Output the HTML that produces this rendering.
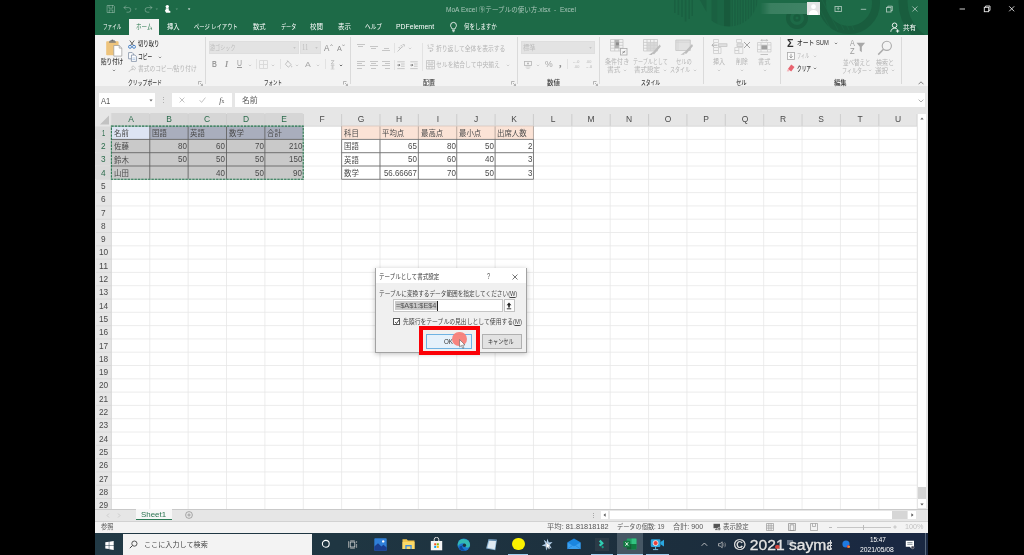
<!DOCTYPE html><html lang="ja"><head><meta charset="utf-8"><title>Excel</title><style>
*{box-sizing:border-box;margin:0;padding:0}
html,body{width:1024px;height:555px;overflow:hidden;background:#000;}
body{position:relative;font-family:"Liberation Sans","Noto Sans CJK JP",sans-serif;font-size:7px;color:#333;}
.abs{position:absolute}
.t{position:absolute;white-space:nowrap;line-height:1;transform-origin:0 50%}
#win{position:absolute;left:95px;top:0;width:833px;height:533px;background:#e6e6e6;overflow:hidden;filter:blur(.4px)}
#title{position:absolute;left:0;top:0;width:833px;height:35px;background:#1d6a47;overflow:hidden}
#ribbon{position:absolute;left:0;top:35px;width:833px;height:51px;background:#f3f3f3;}
.sep{position:absolute;top:37px;width:1px;height:47px;background:#dadada}
.ssep{position:absolute;width:1px;height:10px;background:#e2e2e2}
</style></head><body>
<div id="win">
<div id="title">
<svg class="abs" style="left:0;top:0" width="833" height="35" viewBox="95 0 833 35">
<defs><clipPath id="hc"><circle cx="729" cy="-2.500" r="29"/></clipPath></defs>
<g fill="none" stroke="#195d3e">
<circle cx="849" cy="3" r="27" stroke-width="8"/>
<circle cx="947" cy="2" r="44" stroke-width="9"/>
<circle cx="797" cy="18" r="9" stroke-width="4"/>
<circle cx="797" cy="18" r="2.600" stroke-width="2.200"/>
</g>
<g stroke="#1d6a47" stroke-width="1.100" opacity=".55"><path d="M826 -4l18 34M830 -8l19 38M834 -10l20 40M822 0l16 30M818 6l12 22"/></g>
<g fill="#1a6041">
<rect x="674" y="0" width="1.600" height="13"/><rect x="677.600" y="0" width="1.600" height="15"/><rect x="681.200" y="0" width="1.600" height="17"/><rect x="684.800" y="0" width="1.600" height="21.500"/><rect x="688.400" y="0" width="1.600" height="19"/><rect x="691.500" y="0" width="1.400" height="16"/>
<path d="M699.800 0h6.700v12z"/>
<g clip-path="url(#hc)"><rect x="711.500" y="0" width="5.800" height="30"/><rect x="717.300" y="0" width="6.700" height="30" opacity=".45"/><rect x="724" y="0" width="6.500" height="30" fill="#185a3c"/><rect x="731.5" y="0" width="1.500" height="30"/><rect x="734.2" y="0" width="1.500" height="30"/><rect x="736.9" y="0" width="1.500" height="30"/><rect x="739.6" y="0" width="1.500" height="30"/><rect x="742.3" y="0" width="1.500" height="30"/><rect x="745.0" y="0" width="1.500" height="30"/><rect x="747.7" y="0" width="1.500" height="30"/><rect x="750.4" y="0" width="1.500" height="30"/><rect x="753.1" y="0" width="1.500" height="30"/><rect x="755.8" y="0" width="1.500" height="30"/></g>
</g>
</svg>
<svg class="abs" style="left:0;top:0" width="200" height="19" viewBox="95 0 200 19" fill="none" stroke-linecap="round" stroke-linejoin="round">
<g stroke="rgba(255,255,255,.3)" stroke-width="1">
<path d="M107.500 5.500h6l1 1v6h-7z"/><path d="M109 5.800v2.400h3.600V5.800M109.200 12.300v-2.300h3.600v2.300"/>
<path d="M124.300 7.600h4.200a2.300 2.300 0 0 1 0 4.600h-1.600"/><path d="M125.800 5.800l-1.800 1.800 1.800 1.800"/>
<path d="M151.600 7.600h-4.200a2.300 2.300 0 0 0 0 4.600h1.600"/><path d="M150.100 5.800l1.800 1.800-1.800 1.800"/>
</g>
<g fill="rgba(255,255,255,.3)" stroke="none"><path d="M134.600 8.600h2.400l-1.200 1.400z"/><path d="M155.600 8.600h2.400l-1.200 1.400z"/><path d="M175.600 8.600h2.400l-1.200 1.400z"/></g>
<g fill="#fff" stroke="none"><circle cx="167.300" cy="6.600" r="1.700"/><path d="M165.800 8.200h3v2.300l1.500.6v1.700h-4.200l-1.300-2.400.8-.5z"/>
<path d="M187.800 8.600h2.600l-1.300 1.500z"/></g>
</svg>
<div class="t" style="left:351.0px;top:7px;font-size:6.7px;color:rgba(255,255,255,.6);transform:scaleX(0.980);">MoA Excel ⑨テーブルの使い方.xlsx&nbsp; -&nbsp; Excel</div>
<div class="abs" style="left:665px;top:3px;width:48px;height:11px;background:linear-gradient(90deg,rgba(58,127,96,0),#3a7f60 22%,#3f8365);filter:blur(.5px)"></div>
<svg class="abs" style="left:712.0px;top:2.0px" width="13" height="13" viewBox="0 0 13 13" ><rect width="13" height="13" fill="#e4e4e4"/><circle cx="6.500" cy="4.700" r="2.400" fill="#fff"/><path d="M1.800 13c0-3.400 2-5 4.700-5s4.700 1.600 4.700 5z" fill="#fff"/></svg>
<svg class="abs" style="left:731px;top:0" width="102" height="19" viewBox="826 0 102 19" fill="none" stroke="rgba(255,255,255,.6)" stroke-width=".9">
<rect x="835" y="6.500" width="6.400" height="5"/><path d="M838.200 10.300v-2.500M837 8.800l1.200-1.200 1.200 1.200"/>
<path d="M860.800 9.300h5.400"/>
<rect x="886.500" y="7.500" width="4.500" height="4.500"/><path d="M887.800 7.500v-1.300h4.500v4.500h-1.300"/>
<path d="M912.400 6.500l5 5M917.400 6.500l-5 5"/>
</svg>
<div class="abs" style="left:34.400px;top:19px;width:29.800px;height:17px;background:#f3f3f3"></div>
<div class="t" style="left:40.7px;top:24px;font-size:6.8px;color:#217346;transform:scaleX(0.817);">ホーム</div>
<div class="t" style="left:7.7px;top:24px;font-size:6.8px;color:#fff;transform:scaleX(0.673);">ファイル</div>
<div class="t" style="left:72.0px;top:24px;font-size:6.8px;color:#fff;transform:scaleX(0.927);">挿入</div>
<div class="t" style="left:99.0px;top:24px;font-size:6.8px;color:#fff;transform:scaleX(0.780);">ページ レイアウト</div>
<div class="t" style="left:157.5px;top:24px;font-size:6.8px;color:#fff;transform:scaleX(0.934);">数式</div>
<div class="t" style="left:185.5px;top:24px;font-size:6.8px;color:#fff;transform:scaleX(0.745);">データ</div>
<div class="t" style="left:215.0px;top:24px;font-size:6.8px;color:#fff;transform:scaleX(0.949);">校閲</div>
<div class="t" style="left:242.6px;top:24px;font-size:6.8px;color:#fff;transform:scaleX(0.956);">表示</div>
<div class="t" style="left:269.9px;top:24px;font-size:6.8px;color:#fff;transform:scaleX(0.834);">ヘルプ</div>
<div class="t" style="left:300.9px;top:24px;font-size:6.8px;color:#fff;transform:scaleX(1.008);">PDFelement</div>
<div class="t" style="left:368.9px;top:24px;font-size:6.8px;color:#fff;transform:scaleX(0.804);">何をしますか</div>
<svg class="abs" style="left:353.6px;top:20.8px" width="9" height="12" viewBox="0 0 9 12" fill="none" stroke="#fff" stroke-width=".85"><path d="M3 8c0-1.300-1.400-1.900-1.400-3.700a2.900 2.900 0 0 1 5.800 0c0 1.800-1.400 2.400-1.400 3.700z"/><path d="M3.200 9.400h2.600M3.600 10.700h1.800"/></svg>
<svg class="abs" style="left:795.0px;top:22.0px" width="10" height="11" viewBox="0 0 10 11" fill="none" stroke="#fff" stroke-width=".9"><circle cx="4.600" cy="3.300" r="2.300"/><path d="M.8 9.800c.2-2.300 1.600-3.600 3.800-3.600 1 0 1.700.2 2.300.7M7.600 7.300v3.400M5.900 9h3.400"/></svg>
<div class="t" style="left:807.7px;top:25px;font-size:6.8px;color:#fff;transform:scaleX(0.964);">共有</div>
</div>
<div id="ribbon"></div>
<div class="sep" style="left:109.5px"></div>
<div class="sep" style="left:255.2px"></div>
<div class="sep" style="left:422.0px"></div>
<div class="sep" style="left:503.8px"></div>
<div class="sep" style="left:607.5px"></div>
<div class="sep" style="left:685.0px"></div>
<div class="sep" style="left:805.8px"></div>
<svg class="abs" style="left:10.0px;top:39.0px" width="18" height="18" viewBox="0 0 18 18" ><rect x="1.200" y="2.200" width="12.400" height="14" rx=".8" fill="#eec47c"/>
<path d="M4.800 2.600v-1.200h1.400a1.300 1.300 0 0 1 2.400 0h1.400v1.200z" fill="#6b6b6b"/><rect x="4" y="2.400" width="6.800" height="1.300" fill="#7a7a7a"/>
<path d="M8.800 6.500h5.400l2.600 2.600v8h-8z" fill="#fff" stroke="#9a9a9a" stroke-width=".7"/><path d="M14.200 6.500v2.600h2.600" fill="none" stroke="#9a9a9a" stroke-width=".7"/></svg>
<div class="t" style="left:6.0px;top:59px;font-size:6.8px;color:#333;transform:scaleX(0.820);font-weight:500;">貼り付け</div>
<svg class="abs" style="left:16.6px;top:68.7px" width="4" height="3" viewBox="0 0 4 3"><path d="M.8 .8L2 2 3.200 .8" fill="none" stroke="#777" stroke-width=".75"/></svg>
<svg class="abs" style="left:32.5px;top:39.5px" width="8" height="9" viewBox="0 0 8 9" ><path d="M1.800 .5l3.700 5M6.200 .5l-3.700 5" stroke="#555" stroke-width=".9" fill="none"/><circle cx="2" cy="6.800" r="1.500" fill="none" stroke="#3b79c4" stroke-width=".9"/><circle cx="6" cy="6.800" r="1.500" fill="none" stroke="#3b79c4" stroke-width=".9"/></svg>
<div class="t" style="left:42.5px;top:41px;font-size:6.8px;color:#333;transform:scaleX(0.783);font-weight:500;">切り取り</div>
<svg class="abs" style="left:32.5px;top:51.5px" width="9" height="10" viewBox="0 0 9 10" ><path d="M.6 .6h3.600l1.400 1.400v4.800h-5z" fill="#fff" stroke="#7d8da3" stroke-width=".8"/><path d="M3.400 3h3.400l1.600 1.600v4.800h-5z" fill="#fff" stroke="#7d8da3" stroke-width=".8"/><path d="M4.400 6h2.800M4.400 7.500h2.800" stroke="#8fb0d8" stroke-width=".6"/></svg>
<div class="t" style="left:42.5px;top:54px;font-size:6.8px;color:#333;transform:scaleX(0.696);font-weight:500;">コピー</div>
<svg class="abs" style="left:62.6px;top:55.5px" width="4" height="3" viewBox="0 0 4 3"><path d="M.8 .8L2 2 3.200 .8" fill="none" stroke="#777" stroke-width=".75"/></svg>
<svg class="abs" style="left:32.5px;top:65.0px" width="9" height="8" viewBox="0 0 9 8" ><path d="M5 .8l2.800 2.600-1.500 1.400-2.700-2.600zM4.300 3.400l-3.600 3.600M5.200 4.400l-2 .4" fill="none" stroke="#c2c2c2" stroke-width=".9"/></svg>
<div class="t" style="left:42.7px;top:66px;font-size:6.6px;color:#b4b4b4;transform:scaleX(0.866);">書式のコピー/貼り付け</div>
<div class="t" style="left:33.0px;top:80px;font-size:6.4px;color:#3a3a3a;transform:scaleX(0.758);font-weight:500;">クリップボード</div>
<svg class="abs" style="left:102.7px;top:80.5px" width="5" height="5" viewBox="0 0 5 5" ><path d="M.5 3.500v-3h3M2 2l2.500 2.500M4.500 2.800v1.700h-1.700" fill="none" stroke="#9a9a9a" stroke-width=".7"/></svg>
<div class="abs" style="left:113.9px;top:41px;width:89.800px;height:13.300px;background:#e3e3e3;border:1px solid #dedede"></div>
<div class="abs" style="left:205.0px;top:41px;width:20.700px;height:13.300px;background:#e3e3e3;border:1px solid #dedede"></div>
<div class="t" style="left:115.0px;top:45px;font-size:6.4px;color:#bdbdbd;transform:scaleX(0.801);">游ゴシック</div>
<svg class="abs" style="left:197.6px;top:46.8px" width="3" height="2" viewBox="0 0 3 2" ><path d="M.2 .2h2.600L1.500 1.800z" fill="#bcbcbc"/></svg>
<div class="t" style="left:206.6px;top:44px;font-size:8.4px;color:#bdbdbd;transform:scaleX(0.792);font-family:&quot;Liberation Serif&quot;,serif;">11</div>
<svg class="abs" style="left:220.4px;top:46.8px" width="3" height="2" viewBox="0 0 3 2" ><path d="M.2 .2h2.600L1.500 1.800z" fill="#bcbcbc"/></svg>
<div class="t" style="left:229.2px;top:45px;font-size:8.2px;color:#8a8a8a;transform:scaleX(0.987);">A</div>
<svg class="abs" style="left:234.6px;top:43.5px" width="3" height="2.5" viewBox="0 0 3 2.5" ><path d="M.3 2L1.500 .5 2.700 2" fill="none" stroke="#8a8a8a" stroke-width=".6"/></svg>
<div class="t" style="left:241.8px;top:45px;font-size:7.2px;color:#8a8a8a;transform:scaleX(1.001);">A</div>
<svg class="abs" style="left:246.8px;top:43.5px" width="3" height="2.5" viewBox="0 0 3 2.5" ><path d="M.3 .5L1.500 2 2.700 .5" fill="none" stroke="#8a8a8a" stroke-width=".6"/></svg>
<div class="t" style="left:117.4px;top:60px;font-size:8.6px;color:#9a9a9a;transform:scaleX(0.788);font-weight:bold;">B</div>
<div class="t" style="left:130.4px;top:60px;font-size:8.6px;color:#9a9a9a;transform:scaleX(0.953);font-style:italic;font-family:&quot;Liberation Serif&quot;,serif;font-weight:bold;">I</div>
<div class="t" style="left:142.0px;top:60px;font-size:8.2px;color:#9a9a9a;transform:scaleX(0.844);text-decoration:underline;">U</div>
<svg class="abs" style="left:152.7px;top:63.5px" width="4" height="3" viewBox="0 0 4 3"><path d="M.8 .8L2 2 3.200 .8" fill="none" stroke="#c4c4c4" stroke-width=".75"/></svg>
<div class="ssep" style="left:160.9px;top:59px"></div>
<svg class="abs" style="left:164.2px;top:59.8px" width="9" height="9" viewBox="0 0 9 9" ><path d="M.5 .5h8v8h-8zM4.500 .5v8M.5 4.500h8" fill="none" stroke="#d8d8d8" stroke-width=".9"/></svg>
<svg class="abs" style="left:176.4px;top:63.5px" width="4" height="3" viewBox="0 0 4 3"><path d="M.8 .8L2 2 3.200 .8" fill="none" stroke="#c4c4c4" stroke-width=".75"/></svg>
<div class="ssep" style="left:184.7px;top:59px"></div>
<svg class="abs" style="left:188.5px;top:59.5px" width="9" height="9" viewBox="0 0 9 9" ><path d="M3.800 1.200l3.400 3.400-2.900 2.600-2.900-3zM3.200 .4l1.300 1.500" fill="none" stroke="#b5b5b5" stroke-width=".8"/><path d="M7.800 5.600c.5.900.7 1.300 0 1.800-.7-.5-.5-.9 0-1.800z" fill="#b5b5b5"/></svg>
<svg class="abs" style="left:199.9px;top:63.5px" width="4" height="3" viewBox="0 0 4 3"><path d="M.8 .8L2 2 3.200 .8" fill="none" stroke="#c4c4c4" stroke-width=".75"/></svg>
<div class="t" style="left:209.8px;top:61px;font-size:8px;color:#a8a8a8;transform:scaleX(1.085);">A</div>
<svg class="abs" style="left:221.0px;top:63.5px" width="4" height="3" viewBox="0 0 4 3"><path d="M.8 .8L2 2 3.200 .8" fill="none" stroke="#c4c4c4" stroke-width=".75"/></svg>
<div class="ssep" style="left:229.5px;top:59px"></div>
<svg class="abs" style="left:234.5px;top:59.5px" width="5" height="10" viewBox="0 0 5 10" ><path d="M1 .6h3L1.200 4h3" fill="none" stroke="#b0b0b0" stroke-width=".7"/><path d="M.8 5.500h3.600M2.600 5.500v3.500M1.200 7h2.800M.8 9h3.600" fill="none" stroke="#bcbcbc" stroke-width=".6"/></svg>
<svg class="abs" style="left:244.4px;top:63.5px" width="4" height="3" viewBox="0 0 4 3"><path d="M.8 .8L2 2 3.200 .8" fill="none" stroke="#444" stroke-width=".75"/></svg>
<div class="t" style="left:168.8px;top:80px;font-size:6.4px;color:#3a3a3a;transform:scaleX(0.700);font-weight:500;">フォント</div>
<svg class="abs" style="left:248.2px;top:80.5px" width="5" height="5" viewBox="0 0 5 5" ><path d="M.5 3.500v-3h3M2 2l2.500 2.500M4.500 2.800v1.700h-1.700" fill="none" stroke="#9a9a9a" stroke-width=".7"/></svg>
<div class="abs" style="left:261.6px;top:44.0px;width:8px;height:.9px;background:#c6c6c6"></div><div class="abs" style="left:263.1px;top:45.9px;width:5px;height:.9px;background:#c6c6c6"></div>
<div class="abs" style="left:274.6px;top:46.2px;width:8px;height:.9px;background:#c6c6c6"></div><div class="abs" style="left:276.1px;top:48.1px;width:5px;height:.9px;background:#c6c6c6"></div>
<div class="abs" style="left:288.9px;top:48.0px;width:5px;height:.9px;background:#c6c6c6"></div><div class="abs" style="left:287.4px;top:49.9px;width:8px;height:.9px;background:#c6c6c6"></div>
<div class="ssep" style="left:298.5px;top:43px"></div>
<svg class="abs" style="left:302.0px;top:43.5px" width="8" height="8" viewBox="0 0 8 8" ><path d="M.5 7.500L5 3M1.500 3.500c1.200-.4 2 .2 1.600 1.400M3.600 1.800c1.200-.5 2.100.2 1.700 1.500M5.600 .6l1.800.1-.2 1.800" fill="none" stroke="#b8b8b8" stroke-width=".8"/></svg>
<svg class="abs" style="left:312.8px;top:46.8px" width="4" height="3" viewBox="0 0 4 3"><path d="M.8 .8L2 2 3.200 .8" fill="none" stroke="#c4c4c4" stroke-width=".75"/></svg>
<div class="abs" style="left:261.6px;top:61.0px;width:8px;height:.9px;background:#c6c6c6"></div><div class="abs" style="left:261.6px;top:63.2px;width:5.5px;height:.9px;background:#c6c6c6"></div><div class="abs" style="left:261.6px;top:65.4px;width:8px;height:.9px;background:#c6c6c6"></div><div class="abs" style="left:261.6px;top:67.6px;width:5.5px;height:.9px;background:#c6c6c6"></div>
<div class="abs" style="left:274.6px;top:61.0px;width:8px;height:.9px;background:#c6c6c6"></div><div class="abs" style="left:275.9px;top:63.2px;width:5.5px;height:.9px;background:#c6c6c6"></div><div class="abs" style="left:274.6px;top:65.4px;width:8px;height:.9px;background:#c6c6c6"></div><div class="abs" style="left:275.9px;top:67.6px;width:5.5px;height:.9px;background:#c6c6c6"></div>
<div class="abs" style="left:287.4px;top:61.0px;width:8px;height:.9px;background:#c6c6c6"></div><div class="abs" style="left:289.9px;top:63.2px;width:5.5px;height:.9px;background:#c6c6c6"></div><div class="abs" style="left:287.4px;top:65.4px;width:8px;height:.9px;background:#c6c6c6"></div><div class="abs" style="left:289.9px;top:67.6px;width:5.5px;height:.9px;background:#c6c6c6"></div>
<div class="ssep" style="left:298.5px;top:60px"></div>
<svg class="abs" style="left:302.0px;top:60.5px" width="8" height="9" viewBox="0 0 8 9" ><path d="M.3 .8h7.400M4 3h3.700M4 5.200h3.700M.3 7.600h7.400" stroke="#bdbdbd" stroke-width=".8"/><path d="M.4 4.100h2.400M1.800 3l1.100 1.100-1.100 1.100" fill="none" stroke="#777" stroke-width=".9"/></svg>
<svg class="abs" style="left:314.8px;top:60.5px" width="8" height="9" viewBox="0 0 8 9" ><path d="M.3 .8h7.400M4 3h3.700M4 5.200h3.700M.3 7.600h7.400" stroke="#bdbdbd" stroke-width=".8"/><path d="M.4 4.100h2.400M1.800 3l1.100 1.100-1.100 1.100" fill="none" stroke="#777" stroke-width=".9"/></svg>
<div class="ssep" style="left:326.7px;top:43px;height:28px"></div>
<svg class="abs" style="left:331.5px;top:44.0px" width="7" height="8" viewBox="0 0 7 8" ><path d="M1.200 .6c-.8 1 .8 1.500 0 2.600M.8 4.200h3.600a1.400 1.400 0 0 1 0 2.800h-1.400M3.800 6l-1 1 1 1M3.600 .8h3M5.200 2.400h1.400" fill="none" stroke="#b8b8b8" stroke-width=".8"/></svg>
<div class="t" style="left:341.3px;top:46px;font-size:6.6px;color:#b4b4b4;transform:scaleX(0.879);">折り返して全体を表示する</div>
<svg class="abs" style="left:330.5px;top:59.7px" width="9" height="10" viewBox="0 0 9 10" ><path d="M.5 .5h8v8.500h-8zM.5 3h8M.5 6.500h8M3 .5v2.500M6 .5v2.500M3 6.500v2.500M6 6.500v2.500" fill="none" stroke="#c2c2c2" stroke-width=".8"/><path d="M2 4.750h5" stroke="#aaa" stroke-width=".7"/></svg>
<div class="t" style="left:341.3px;top:62px;font-size:6.6px;color:#b4b4b4;transform:scaleX(0.883);">セルを結合して中央揃え</div>
<svg class="abs" style="left:411.0px;top:64.0px" width="4" height="3" viewBox="0 0 4 3"><path d="M.8 .8L2 2 3.200 .8" fill="none" stroke="#c4c4c4" stroke-width=".75"/></svg>
<div class="t" style="left:328.0px;top:80px;font-size:6.4px;color:#3a3a3a;transform:scaleX(0.939);font-weight:500;">配置</div>
<svg class="abs" style="left:415.7px;top:80.5px" width="5" height="5" viewBox="0 0 5 5" ><path d="M.5 3.500v-3h3M2 2l2.500 2.500M4.500 2.800v1.700h-1.700" fill="none" stroke="#9a9a9a" stroke-width=".7"/></svg>
<div class="abs" style="left:426.2px;top:41px;width:73.700px;height:13.300px;background:#e3e3e3;border:1px solid #dedede"></div>
<div class="t" style="left:428.0px;top:45px;font-size:6.4px;color:#bdbdbd;transform:scaleX(0.978);">標準</div>
<svg class="abs" style="left:493.7px;top:46.8px" width="3" height="2" viewBox="0 0 3 2" ><path d="M.2 .2h2.600L1.500 1.800z" fill="#bcbcbc"/></svg>
<svg class="abs" style="left:428.5px;top:60.5px" width="8" height="8" viewBox="0 0 8 8" ><rect x=".5" y=".5" width="7" height="4" fill="none" stroke="#b5b5b5" stroke-width=".8"/><circle cx="4" cy="2.500" r="1" fill="#b5b5b5"/><path d="M1.500 6h5M2.500 7.400h3" stroke="#c8c8c8" stroke-width=".7"/></svg>
<svg class="abs" style="left:440.6px;top:63.5px" width="4" height="3" viewBox="0 0 4 3"><path d="M.8 .8L2 2 3.200 .8" fill="none" stroke="#c4c4c4" stroke-width=".75"/></svg>
<div class="t" style="left:449.5px;top:60px;font-size:8.4px;color:#a6a6a6;transform:scaleX(1.033);">%</div>
<div class="t" style="left:464.4px;top:59px;font-size:10px;color:#8c8c8c;transform:scaleX(1.040);font-weight:bold;font-family:&quot;Liberation Serif&quot;,serif;">,</div>
<div class="ssep" style="left:472.3px;top:59px"></div>
<div class="t" style="left:477.5px;top:61px;font-size:3.8px;color:#b0b0b0;">←.0</div>
<div class="t" style="left:479.0px;top:66px;font-size:3.8px;color:#b8b8b8;">.00</div>
<div class="t" style="left:491.0px;top:61px;font-size:3.8px;color:#b8b8b8;">.00</div>
<div class="t" style="left:490.2px;top:66px;font-size:3.8px;color:#b0b0b0;">→.0</div>
<div class="t" style="left:452.2px;top:80px;font-size:6.4px;color:#3a3a3a;transform:scaleX(1.017);font-weight:500;">数値</div>
<svg class="abs" style="left:497.7px;top:80.5px" width="5" height="5" viewBox="0 0 5 5" ><path d="M.5 3.500v-3h3M2 2l2.500 2.500M4.500 2.800v1.700h-1.700" fill="none" stroke="#9a9a9a" stroke-width=".7"/></svg>
<svg class="abs" style="left:514.5px;top:39.0px" width="18" height="17" viewBox="0 0 18 17" ><path d="M.5 .5h12.500v11.500H.5zM.5 3.400h12.500M.5 6.300h12.500M.5 9.200h12.500M4.700 .5v11.500M8.900 .5v11.500" fill="none" stroke="#c8c8c8" stroke-width=".8"/><rect x="4.700" y=".9" width="4.200" height="8.300" fill="#b4b4b4"/><rect x="6" y="3.400" width="2.900" height="2.900" fill="#8c8c8c"/><rect x="10.500" y="9.500" width="6.500" height="6.500" fill="#f6f6f6" stroke="#a8a8a8" stroke-width=".8"/><path d="M12.400 13h2.800M12.400 14.400l2.800-2.600" stroke="#777" stroke-width=".7"/></svg>
<div class="t" style="left:510.0px;top:59px;font-size:6.6px;color:#b4b4b4;transform:scaleX(0.918);">条件付き</div>
<div class="t" style="left:512.3px;top:67px;font-size:6.6px;color:#b4b4b4;transform:scaleX(1.016);">書式</div>
<svg class="abs" style="left:528.0px;top:68.8px" width="4" height="3" viewBox="0 0 4 3"><path d="M.8 .8L2 2 3.200 .8" fill="none" stroke="#c4c4c4" stroke-width=".75"/></svg>
<svg class="abs" style="left:547.5px;top:39.0px" width="18" height="17" viewBox="0 0 18 17" ><path d="M.5 .5h14v11.500H.5zM.5 3.400h14M.5 6.300h14M.5 9.200h14M4 .5v11.500M7.500 .5v11.500M11 .5v11.500" fill="none" stroke="#c8c8c8" stroke-width=".8"/><rect x="4" y="3.400" width="10.500" height="8.600" fill="#d2d2d2" opacity=".8"/><path d="M16.800 5.500l-6.800 7.500-2.600 1.800 3.800 .4 6.600-7.600z" fill="#bdbdbd"/><path d="M5.500 15.800l3-1.200 1 1.200z" fill="#a8a8a8"/></svg>
<div class="t" style="left:537.5px;top:59px;font-size:6.6px;color:#b4b4b4;transform:scaleX(0.762);">テーブルとして</div>
<div class="t" style="left:538.8px;top:67px;font-size:6.6px;color:#b4b4b4;transform:scaleX(0.986);">書式設定</div>
<svg class="abs" style="left:567.5px;top:68.8px" width="4" height="3" viewBox="0 0 4 3"><path d="M.8 .8L2 2 3.200 .8" fill="none" stroke="#c4c4c4" stroke-width=".75"/></svg>
<svg class="abs" style="left:580.0px;top:39.0px" width="18" height="17" viewBox="0 0 18 17" ><path d="M.8 1h14.500v10.500H.8z" fill="#e2e2e2" stroke="#c4c4c4" stroke-width=".8"/><path d="M3 1v10.500M.8 3.200h14.500" stroke="#d0d0d0" stroke-width=".6"/><path d="M17 5l-6.800 7.500-2.600 1.800 3.800 .4 6.600-7.600z" fill="#bdbdbd"/><path d="M5.500 15.500l3-1.200 1 1.200z" fill="#a8a8a8"/></svg>
<div class="t" style="left:581.0px;top:59px;font-size:6.6px;color:#b4b4b4;transform:scaleX(0.804);">セルの</div>
<div class="t" style="left:575.4px;top:67px;font-size:6.6px;color:#b4b4b4;transform:scaleX(0.758);">スタイル</div>
<svg class="abs" style="left:598.0px;top:68.8px" width="4" height="3" viewBox="0 0 4 3"><path d="M.8 .8L2 2 3.200 .8" fill="none" stroke="#c4c4c4" stroke-width=".75"/></svg>
<div class="t" style="left:545.7px;top:80px;font-size:6.4px;color:#3a3a3a;transform:scaleX(0.747);font-weight:500;">スタイル</div>
<svg class="abs" style="left:615.5px;top:39.0px" width="17" height="17" viewBox="0 0 17 17" ><path d="M2.500 .5h5v3h-5zM2.500 8.500h5v3h-5zM2.500 11.500h5v3h-5zM7.500 8.500h2.500v6h-2.500" fill="none" stroke="#cdcdcd" stroke-width=".8"/><rect x="7.500" y="4.800" width="8.500" height="2.800" fill="#e0e0e0" stroke="#c0c0c0" stroke-width=".7"/><path d="M6.500 6.200H1M3 4.200l-2 2 2 2" fill="none" stroke="#a8a8a8" stroke-width=".9"/></svg>
<div class="t" style="left:617.7px;top:59px;font-size:6.6px;color:#b4b4b4;transform:scaleX(0.902);">挿入</div>
<svg class="abs" style="left:621.7px;top:68.8px" width="4" height="3" viewBox="0 0 4 3"><path d="M.8 .8L2 2 3.200 .8" fill="none" stroke="#c4c4c4" stroke-width=".75"/></svg>
<svg class="abs" style="left:638.5px;top:39.0px" width="17" height="17" viewBox="0 0 17 17" ><path d="M2.500 .5h5v3h-5zM.8 8.500h4v3h-4zM.8 11.500h4v3h-4zM4.800 8.500h4v6h-4" fill="none" stroke="#cdcdcd" stroke-width=".8"/><rect x="3" y="4.800" width="6" height="2.800" fill="#e0e0e0" stroke="#c0c0c0" stroke-width=".7"/><path d="M10 3l6 6M16 3l-6 6" fill="none" stroke="#a4a4a4" stroke-width="1"/></svg>
<div class="t" style="left:640.5px;top:59px;font-size:6.6px;color:#b4b4b4;transform:scaleX(0.902);">削除</div>
<svg class="abs" style="left:644.5px;top:68.8px" width="4" height="3" viewBox="0 0 4 3"><path d="M.8 .8L2 2 3.200 .8" fill="none" stroke="#c4c4c4" stroke-width=".75"/></svg>
<svg class="abs" style="left:660.5px;top:39.0px" width="17" height="17" viewBox="0 0 17 17" ><path d="M1.500 3.500h13.500v9.500H1.500zM5 3.500v9.500M11.500 3.500v9.500M1.500 6h13.500M1.500 10.500h13.500" fill="none" stroke="#cdcdcd" stroke-width=".8"/><rect x="5.400" y="6.300" width="5.800" height="4" fill="#a0a0a0"/><path d="M5 1.300h6.500M6 .3l-1 1 1 1M10.500 .3l1 1-1 1M4.500 15.500h7.500" fill="none" stroke="#aaa" stroke-width=".7"/></svg>
<div class="t" style="left:663.4px;top:59px;font-size:6.6px;color:#b4b4b4;transform:scaleX(0.940);">書式</div>
<svg class="abs" style="left:667.6px;top:68.8px" width="4" height="3" viewBox="0 0 4 3"><path d="M.8 .8L2 2 3.200 .8" fill="none" stroke="#c4c4c4" stroke-width=".75"/></svg>
<div class="t" style="left:640.5px;top:80px;font-size:6.4px;color:#3a3a3a;transform:scaleX(0.837);font-weight:500;">セル</div>
<div class="t" style="left:692.2px;top:39px;font-size:10px;color:#333;transform:scaleX(1.097);font-weight:bold;">Σ</div>
<div class="t" style="left:702.0px;top:40px;font-size:6.8px;color:#333;transform:scaleX(0.848);font-weight:500;">オート SUM</div>
<svg class="abs" style="left:738.8px;top:42.0px" width="4" height="3" viewBox="0 0 4 3"><path d="M.8 .8L2 2 3.200 .8" fill="none" stroke="#666" stroke-width=".75"/></svg>
<svg class="abs" style="left:692.0px;top:51.5px" width="8" height="8" viewBox="0 0 8 8" ><rect x=".5" y=".5" width="7" height="7" fill="#fafafa" stroke="#a8a8a8" stroke-width=".8"/><path d="M4 1.800v4M2.400 4.300l1.600 1.600 1.600-1.600" fill="none" stroke="#8a8a8a" stroke-width=".8"/></svg>
<div class="t" style="left:702.0px;top:53px;font-size:6.6px;color:#b4b4b4;transform:scaleX(0.605);">フィル</div>
<svg class="abs" style="left:717.7px;top:54.5px" width="4" height="3" viewBox="0 0 4 3"><path d="M.8 .8L2 2 3.200 .8" fill="none" stroke="#c4c4c4" stroke-width=".75"/></svg>
<svg class="abs" style="left:690.8px;top:64.2px" width="9" height="8" viewBox="0 0 9 8" ><path d="M5.200 .5l3.300 2.400-3.300 4.600-3.300-2.400z" fill="#e8636f"/><path d="M1.900 5.100l1.700 1.300-1 1.100-1.900-.3z" fill="#f4b6bb"/></svg>
<div class="t" style="left:702.0px;top:66px;font-size:6.8px;color:#333;transform:scaleX(0.687);font-weight:500;">クリア</div>
<svg class="abs" style="left:717.7px;top:67.2px" width="4" height="3" viewBox="0 0 4 3"><path d="M.8 .8L2 2 3.200 .8" fill="none" stroke="#666" stroke-width=".75"/></svg>
<div class="t" style="left:754.8px;top:39px;font-size:8.4px;color:#9a9a9a;transform:scaleX(0.858);">A</div>
<div class="t" style="left:754.8px;top:47px;font-size:8.4px;color:#9a9a9a;transform:scaleX(0.898);">Z</div>
<svg class="abs" style="left:760.5px;top:42.0px" width="10" height="12" viewBox="0 0 10 12" ><path d="M.5 .8h8.600l-3.300 4v5.400l-2 -1.400v-4z" fill="#a8a8a8"/></svg>
<div class="t" style="left:748.0px;top:60px;font-size:6.6px;color:#b4b4b4;transform:scaleX(0.834);">並べ替えと</div>
<div class="t" style="left:746.5px;top:68px;font-size:6.6px;color:#b4b4b4;transform:scaleX(0.761);">フィルター</div>
<svg class="abs" style="left:773.3px;top:69.3px" width="4" height="3" viewBox="0 0 4 3"><path d="M.8 .8L2 2 3.200 .8" fill="none" stroke="#c4c4c4" stroke-width=".75"/></svg>
<svg class="abs" style="left:781.5px;top:39.5px" width="16" height="16" viewBox="0 0 16 16" ><circle cx="9.800" cy="5.800" r="4.600" fill="none" stroke="#ababab" stroke-width="1.100"/><path d="M6.500 9.200L1.200 14.600" stroke="#ababab" stroke-width="1.500"/></svg>
<div class="t" style="left:780.8px;top:60px;font-size:6.6px;color:#b4b4b4;transform:scaleX(0.915);">検索と</div>
<div class="t" style="left:780.3px;top:68px;font-size:6.6px;color:#b4b4b4;transform:scaleX(1.001);">選択</div>
<svg class="abs" style="left:795.5px;top:69.3px" width="4" height="3" viewBox="0 0 4 3"><path d="M.8 .8L2 2 3.200 .8" fill="none" stroke="#c4c4c4" stroke-width=".75"/></svg>
<div class="t" style="left:738.6px;top:80px;font-size:6.4px;color:#3a3a3a;transform:scaleX(0.986);font-weight:500;">編集</div>
<svg class="abs" style="left:822.5px;top:80.5px" width="6" height="4" viewBox="0 0 6 4" ><path d="M.5 3.300L3 .8 5.500 3.300" fill="none" stroke="#666" stroke-width=".8"/></svg>
<div class="abs" style="left:3.6px;top:92.800px;width:56.6px;height:14.100px;background:#fff"></div>
<div class="abs" style="left:77.3px;top:92.800px;width:59.9px;height:14.100px;background:#fff"></div>
<div class="abs" style="left:139.5px;top:92.800px;width:690.1px;height:14.100px;background:#fff"></div>
<div class="t" style="left:6.3px;top:97px;font-size:8.6px;color:#555;transform:scaleX(0.884);">A1</div>
<svg class="abs" style="left:53.6px;top:99.0px" width="4" height="3" viewBox="0 0 4 3" ><path d="M.4 .5h3.200L2 2.400z" fill="#666"/></svg>
<div class="abs" style="left:68.1px;top:96.6px;width:.9px;height:1px;background:#b0b0b0"></div>
<div class="abs" style="left:68.1px;top:99.2px;width:.9px;height:1px;background:#b0b0b0"></div>
<div class="abs" style="left:68.1px;top:101.8px;width:.9px;height:1px;background:#b0b0b0"></div>
<svg class="abs" style="left:84.2px;top:97.0px" width="6" height="6" viewBox="0 0 6 6" ><path d="M.6 .6l4.800 4.800M5.400 .6L.6 5.400" stroke="#b4b4b4" stroke-width=".8" fill="none"/></svg>
<svg class="abs" style="left:103.8px;top:97.0px" width="7" height="6" viewBox="0 0 7 6" ><path d="M.6 3.200l2 2.200L6.400 .6" stroke="#b4b4b4" stroke-width=".8" fill="none"/></svg>
<div class="t" style="left:124.3px;top:97px;font-size:8px;color:#555;font-family:&quot;Liberation Serif&quot;,serif;"><i>f</i><span style="font-size:5.500px">x</span></div>
<div class="t" style="left:146.9px;top:97px;font-size:8px;color:#555;transform:scaleX(0.981);">名前</div>
<svg class="abs" style="left:823.0px;top:98.5px" width="6" height="4" viewBox="0 0 6 4" ><path d="M.6 .6L3 3 5.400 .6" fill="none" stroke="#999" stroke-width=".8"/></svg>
<div class="abs" style="left:0;top:113px;width:822.0px;height:396px;background:#e6e6e6"></div>
<div class="abs" style="left:16.4px;top:126.1px;width:805.6px;height:382.9px;background:#fff"></div>
<div class="abs" style="left:16.4px;top:113px;width:191.8px;height:13.100px;background:#d6d6d6"></div>
<div class="abs" style="left:0;top:126.1px;width:16.400px;height:53.2px;background:#d9d9d9"></div>
<svg class="abs" style="left:4.0px;top:115.0px" width="11" height="10" viewBox="0 0 11 10" ><path d="M10 .5v9H1z" fill="#c2c2c2"/></svg>
<svg class="abs" style="left:0;top:0" width="833" height="533" viewBox="0 0 833 533" fill="none"><path d="M16.40 113V509 M54.77 113V509 M93.14 113V509 M131.51 113V509 M169.88 113V509 M208.25 113V509 M246.62 113V509 M284.99 113V509 M323.36 113V509 M361.73 113V509 M400.10 113V509 M438.47 113V509 M476.84 113V509 M515.21 113V509 M553.58 113V509 M591.95 113V509 M630.32 113V509 M668.69 113V509 M707.06 113V509 M745.43 113V509 M783.80 113V509 M822.17 113V509 M0 126.10H822.0 M0 139.40H822.0 M0 152.70H822.0 M0 166.00H822.0 M0 179.30H822.0 M0 192.60H822.0 M0 205.90H822.0 M0 219.20H822.0 M0 232.50H822.0 M0 245.80H822.0 M0 259.10H822.0 M0 272.40H822.0 M0 285.70H822.0 M0 299.00H822.0 M0 312.30H822.0 M0 325.60H822.0 M0 338.90H822.0 M0 352.20H822.0 M0 365.50H822.0 M0 378.80H822.0 M0 392.10H822.0 M0 405.40H822.0 M0 418.70H822.0 M0 432.00H822.0 M0 445.30H822.0 M0 458.60H822.0 M0 471.90H822.0 M0 485.20H822.0 M0 498.50H822.0" stroke="#e7e7e7" stroke-width=".8"/><path d="M54.77 114V126 M93.14 114V126 M131.51 114V126 M169.88 114V126 M208.25 114V126 M246.62 114V126 M284.99 114V126 M323.36 114V126 M361.73 114V126 M400.10 114V126 M438.47 114V126 M476.84 114V126 M515.21 114V126 M553.58 114V126 M591.95 114V126 M630.32 114V126 M668.69 114V126 M707.06 114V126 M745.43 114V126 M783.80 114V126 M822.17 114V126" stroke="#c6c6c6" stroke-width=".8"/><path d="M1 139.40H16.4 M1 152.70H16.4 M1 166.00H16.4 M1 179.30H16.4 M1 192.60H16.4 M1 205.90H16.4 M1 219.20H16.4 M1 232.50H16.4 M1 245.80H16.4 M1 259.10H16.4 M1 272.40H16.4 M1 285.70H16.4 M1 299.00H16.4 M1 312.30H16.4 M1 325.60H16.4 M1 338.90H16.4 M1 352.20H16.4 M1 365.50H16.4 M1 378.80H16.4 M1 392.10H16.4 M1 405.40H16.4 M1 418.70H16.4 M1 432.00H16.4 M1 445.30H16.4 M1 458.60H16.4 M1 471.90H16.4 M1 485.20H16.4 M1 498.50H16.4" stroke="#d6d6d6" stroke-width=".8"/><path d="M16.4 126.100H822.0M16.4 113V509" stroke="#d6d6d6" stroke-width=".8"/></svg>
<div class="t" style="left:35.6px;top:115px;font-size:9px;color:#2a6b4b;transform:translateX(-50%) scaleX(.94);transform-origin:50% 50%">A</div>
<div class="t" style="left:74.0px;top:115px;font-size:9px;color:#2a6b4b;transform:translateX(-50%) scaleX(.94);transform-origin:50% 50%">B</div>
<div class="t" style="left:112.3px;top:115px;font-size:9px;color:#2a6b4b;transform:translateX(-50%) scaleX(.94);transform-origin:50% 50%">C</div>
<div class="t" style="left:150.7px;top:115px;font-size:9px;color:#2a6b4b;transform:translateX(-50%) scaleX(.94);transform-origin:50% 50%">D</div>
<div class="t" style="left:189.1px;top:115px;font-size:9px;color:#2a6b4b;transform:translateX(-50%) scaleX(.94);transform-origin:50% 50%">E</div>
<div class="t" style="left:227.4px;top:115px;font-size:9px;color:#4a4a4a;transform:translateX(-50%) scaleX(.94);transform-origin:50% 50%">F</div>
<div class="t" style="left:265.8px;top:115px;font-size:9px;color:#4a4a4a;transform:translateX(-50%) scaleX(.94);transform-origin:50% 50%">G</div>
<div class="t" style="left:304.2px;top:115px;font-size:9px;color:#4a4a4a;transform:translateX(-50%) scaleX(.94);transform-origin:50% 50%">H</div>
<div class="t" style="left:342.5px;top:115px;font-size:9px;color:#4a4a4a;transform:translateX(-50%) scaleX(.94);transform-origin:50% 50%">I</div>
<div class="t" style="left:380.9px;top:115px;font-size:9px;color:#4a4a4a;transform:translateX(-50%) scaleX(.94);transform-origin:50% 50%">J</div>
<div class="t" style="left:419.3px;top:115px;font-size:9px;color:#4a4a4a;transform:translateX(-50%) scaleX(.94);transform-origin:50% 50%">K</div>
<div class="t" style="left:457.7px;top:115px;font-size:9px;color:#4a4a4a;transform:translateX(-50%) scaleX(.94);transform-origin:50% 50%">L</div>
<div class="t" style="left:496.0px;top:115px;font-size:9px;color:#4a4a4a;transform:translateX(-50%) scaleX(.94);transform-origin:50% 50%">M</div>
<div class="t" style="left:534.4px;top:115px;font-size:9px;color:#4a4a4a;transform:translateX(-50%) scaleX(.94);transform-origin:50% 50%">N</div>
<div class="t" style="left:572.8px;top:115px;font-size:9px;color:#4a4a4a;transform:translateX(-50%) scaleX(.94);transform-origin:50% 50%">O</div>
<div class="t" style="left:611.1px;top:115px;font-size:9px;color:#4a4a4a;transform:translateX(-50%) scaleX(.94);transform-origin:50% 50%">P</div>
<div class="t" style="left:649.5px;top:115px;font-size:9px;color:#4a4a4a;transform:translateX(-50%) scaleX(.94);transform-origin:50% 50%">Q</div>
<div class="t" style="left:687.9px;top:115px;font-size:9px;color:#4a4a4a;transform:translateX(-50%) scaleX(.94);transform-origin:50% 50%">R</div>
<div class="t" style="left:726.2px;top:115px;font-size:9px;color:#4a4a4a;transform:translateX(-50%) scaleX(.94);transform-origin:50% 50%">S</div>
<div class="t" style="left:764.6px;top:115px;font-size:9px;color:#4a4a4a;transform:translateX(-50%) scaleX(.94);transform-origin:50% 50%">T</div>
<div class="t" style="left:803.0px;top:115px;font-size:9px;color:#4a4a4a;transform:translateX(-50%) scaleX(.94);transform-origin:50% 50%">U</div>
<div class="t" style="left:6.9px;top:130px;font-size:8.2px;color:#2a6b4b;transform:scaleX(0.701);">1</div>
<div class="t" style="left:6.2px;top:143px;font-size:8.2px;color:#2a6b4b;transform:scaleX(1.008);">2</div>
<div class="t" style="left:6.2px;top:156px;font-size:8.2px;color:#2a6b4b;transform:scaleX(1.008);">3</div>
<div class="t" style="left:6.2px;top:170px;font-size:8.2px;color:#2a6b4b;transform:scaleX(1.008);">4</div>
<div class="t" style="left:6.2px;top:183px;font-size:8.2px;color:#4a4a4a;transform:scaleX(1.008);">5</div>
<div class="t" style="left:6.2px;top:196px;font-size:8.2px;color:#4a4a4a;transform:scaleX(1.008);">6</div>
<div class="t" style="left:6.2px;top:210px;font-size:8.2px;color:#4a4a4a;transform:scaleX(1.008);">7</div>
<div class="t" style="left:6.2px;top:223px;font-size:8.2px;color:#4a4a4a;transform:scaleX(1.008);">8</div>
<div class="t" style="left:6.2px;top:236px;font-size:8.2px;color:#4a4a4a;transform:scaleX(1.008);">9</div>
<div class="t" style="left:3.9px;top:249px;font-size:8.2px;color:#4a4a4a;transform:scaleX(1.010);">10</div>
<div class="t" style="left:3.9px;top:263px;font-size:8.2px;color:#4a4a4a;transform:scaleX(1.082);">11</div>
<div class="t" style="left:3.9px;top:276px;font-size:8.2px;color:#4a4a4a;transform:scaleX(1.010);">12</div>
<div class="t" style="left:3.9px;top:289px;font-size:8.2px;color:#4a4a4a;transform:scaleX(1.010);">13</div>
<div class="t" style="left:3.9px;top:303px;font-size:8.2px;color:#4a4a4a;transform:scaleX(1.010);">14</div>
<div class="t" style="left:3.9px;top:316px;font-size:8.2px;color:#4a4a4a;transform:scaleX(1.010);">15</div>
<div class="t" style="left:3.9px;top:329px;font-size:8.2px;color:#4a4a4a;transform:scaleX(1.010);">16</div>
<div class="t" style="left:3.9px;top:343px;font-size:8.2px;color:#4a4a4a;transform:scaleX(1.010);">17</div>
<div class="t" style="left:3.9px;top:356px;font-size:8.2px;color:#4a4a4a;transform:scaleX(1.010);">18</div>
<div class="t" style="left:3.9px;top:369px;font-size:8.2px;color:#4a4a4a;transform:scaleX(1.010);">19</div>
<div class="t" style="left:3.9px;top:382px;font-size:8.2px;color:#4a4a4a;transform:scaleX(1.010);">20</div>
<div class="t" style="left:3.9px;top:396px;font-size:8.2px;color:#4a4a4a;transform:scaleX(1.010);">21</div>
<div class="t" style="left:3.9px;top:409px;font-size:8.2px;color:#4a4a4a;transform:scaleX(1.010);">22</div>
<div class="t" style="left:3.9px;top:422px;font-size:8.2px;color:#4a4a4a;transform:scaleX(1.010);">23</div>
<div class="t" style="left:3.9px;top:436px;font-size:8.2px;color:#4a4a4a;transform:scaleX(1.010);">24</div>
<div class="t" style="left:3.9px;top:449px;font-size:8.2px;color:#4a4a4a;transform:scaleX(1.010);">25</div>
<div class="t" style="left:3.9px;top:462px;font-size:8.2px;color:#4a4a4a;transform:scaleX(1.010);">26</div>
<div class="t" style="left:3.9px;top:476px;font-size:8.2px;color:#4a4a4a;transform:scaleX(1.010);">27</div>
<div class="t" style="left:3.9px;top:489px;font-size:8.2px;color:#4a4a4a;transform:scaleX(1.010);">28</div>
<div class="t" style="left:3.9px;top:502px;font-size:8.2px;color:#4a4a4a;transform:scaleX(1.010);">29</div>
<div class="abs" style="left:16.4px;top:139.4px;width:191.8px;height:39.9px;background:#c9c9c9"></div>
<div class="abs" style="left:54.8px;top:126.1px;width:153.5px;height:13.3px;background:#a9aebd"></div>
<div class="abs" style="left:16.4px;top:126.1px;width:38.4px;height:13.3px;background:#dde4f3"></div>
<svg class="abs" style="left:0;top:0" width="833" height="533" viewBox="0 0 833 533" fill="none"><path d="M54.77 126.1V179.3 M93.14 126.1V179.3 M131.51 126.1V179.3 M169.88 126.1V179.3 M16.4 139.40H208.2 M16.4 152.70H208.2 M16.4 166.00H208.2" stroke="#606060" stroke-width=".85"/><rect x="16.4" y="126.1" width="191.8" height="53.2" stroke="#9dbfae" stroke-width="1"/><rect x="16.4" y="126.1" width="191.8" height="53.2" stroke="#2b7350" stroke-width="1.050" stroke-dasharray="2.300 1.100"/></svg>
<div class="t" style="left:18.5px;top:130px;font-size:8px;color:#4a4a4a;transform:scaleX(0.925);">名前</div>
<div class="t" style="left:56.9px;top:130px;font-size:8px;color:#4a4a4a;transform:scaleX(0.925);">国語</div>
<div class="t" style="left:95.2px;top:130px;font-size:8px;color:#4a4a4a;transform:scaleX(0.925);">英語</div>
<div class="t" style="left:133.6px;top:130px;font-size:8px;color:#4a4a4a;transform:scaleX(0.925);">数学</div>
<div class="t" style="left:172.0px;top:130px;font-size:8px;color:#4a4a4a;transform:scaleX(0.925);">合計</div>
<div class="t" style="left:18.5px;top:143px;font-size:8px;color:#4a4a4a;transform:scaleX(0.925);">佐藤</div>
<div class="t" style="left:82.9px;top:143px;font-size:8.2px;color:#4a4a4a;transform:scaleX(0.977);">80</div>
<div class="t" style="left:121.3px;top:143px;font-size:8.2px;color:#4a4a4a;transform:scaleX(0.977);">60</div>
<div class="t" style="left:159.7px;top:143px;font-size:8.2px;color:#4a4a4a;transform:scaleX(0.977);">70</div>
<div class="t" style="left:193.6px;top:143px;font-size:8.2px;color:#4a4a4a;transform:scaleX(0.976);">210</div>
<div class="t" style="left:18.5px;top:157px;font-size:8px;color:#4a4a4a;transform:scaleX(0.925);">鈴木</div>
<div class="t" style="left:82.9px;top:156px;font-size:8.2px;color:#4a4a4a;transform:scaleX(0.977);">50</div>
<div class="t" style="left:121.3px;top:156px;font-size:8.2px;color:#4a4a4a;transform:scaleX(0.977);">50</div>
<div class="t" style="left:159.7px;top:156px;font-size:8.2px;color:#4a4a4a;transform:scaleX(0.977);">50</div>
<div class="t" style="left:193.6px;top:156px;font-size:8.2px;color:#4a4a4a;transform:scaleX(0.976);">150</div>
<div class="t" style="left:18.5px;top:170px;font-size:8px;color:#4a4a4a;transform:scaleX(0.925);">山田</div>
<div class="t" style="left:121.3px;top:170px;font-size:8.2px;color:#4a4a4a;transform:scaleX(0.977);">40</div>
<div class="t" style="left:159.7px;top:170px;font-size:8.2px;color:#4a4a4a;transform:scaleX(0.977);">50</div>
<div class="t" style="left:198.1px;top:170px;font-size:8.2px;color:#4a4a4a;transform:scaleX(0.977);">90</div>
<div class="abs" style="left:246.6px;top:126.1px;width:191.9px;height:13.3px;background:#fbe3d6"></div>
<svg class="abs" style="left:0;top:0" width="833" height="533" viewBox="0 0 833 533" fill="none"><path d="M246.62 126.1V139.4 M284.99 126.1V139.4 M323.36 126.1V139.4 M361.73 126.1V139.4 M400.10 126.1V139.4 M438.47 126.1V139.4" stroke="#a99a92" stroke-width=".8"/><path d="M246.62 139.4V179.3 M284.99 139.4V179.3 M323.36 139.4V179.3 M361.73 139.4V179.3 M400.10 139.4V179.3 M438.47 139.4V179.3 M246.6 139.40H438.5 M246.6 152.70H438.5 M246.6 166.00H438.5 M246.6 179.30H438.5" stroke="#6e6e6e" stroke-width=".85"/><path d="M246.6 126.10H438.5" stroke="#dccbc2" stroke-width=".8"/></svg>
<div class="t" style="left:248.7px;top:130px;font-size:8px;color:#4a4a4a;transform:scaleX(0.925);">科目</div>
<div class="t" style="left:287.1px;top:130px;font-size:8px;color:#4a4a4a;transform:scaleX(0.925);">平均点</div>
<div class="t" style="left:325.5px;top:130px;font-size:8px;color:#4a4a4a;transform:scaleX(0.925);">最高点</div>
<div class="t" style="left:363.8px;top:130px;font-size:8px;color:#4a4a4a;transform:scaleX(0.925);">最小点</div>
<div class="t" style="left:402.2px;top:130px;font-size:8px;color:#4a4a4a;transform:scaleX(0.925);">出席人数</div>
<div class="t" style="left:248.7px;top:143px;font-size:8px;color:#4a4a4a;transform:scaleX(0.925);">国語</div>
<div class="t" style="left:313.2px;top:143px;font-size:8.2px;color:#4a4a4a;transform:scaleX(0.977);">65</div>
<div class="t" style="left:351.5px;top:143px;font-size:8.2px;color:#4a4a4a;transform:scaleX(0.977);">80</div>
<div class="t" style="left:389.9px;top:143px;font-size:8.2px;color:#4a4a4a;transform:scaleX(0.977);">50</div>
<div class="t" style="left:432.7px;top:143px;font-size:8.2px;color:#4a4a4a;transform:scaleX(0.975);">2</div>
<div class="t" style="left:248.7px;top:157px;font-size:8px;color:#4a4a4a;transform:scaleX(0.925);">英語</div>
<div class="t" style="left:313.2px;top:156px;font-size:8.2px;color:#4a4a4a;transform:scaleX(0.977);">50</div>
<div class="t" style="left:351.5px;top:156px;font-size:8.2px;color:#4a4a4a;transform:scaleX(0.977);">60</div>
<div class="t" style="left:389.9px;top:156px;font-size:8.2px;color:#4a4a4a;transform:scaleX(0.977);">40</div>
<div class="t" style="left:432.7px;top:156px;font-size:8.2px;color:#4a4a4a;transform:scaleX(0.975);">3</div>
<div class="t" style="left:248.7px;top:170px;font-size:8px;color:#4a4a4a;transform:scaleX(0.925);">数学</div>
<div class="t" style="left:289.3px;top:170px;font-size:8.2px;color:#4a4a4a;transform:scaleX(0.960);">56.66667</div>
<div class="t" style="left:351.5px;top:170px;font-size:8.2px;color:#4a4a4a;transform:scaleX(0.977);">70</div>
<div class="t" style="left:389.9px;top:170px;font-size:8.2px;color:#4a4a4a;transform:scaleX(0.977);">50</div>
<div class="t" style="left:432.7px;top:170px;font-size:8.2px;color:#4a4a4a;transform:scaleX(0.975);">3</div>
<div class="abs" style="left:822.0px;top:113px;width:11px;height:396px;background:#e6e6e6"></div>
<div class="abs" style="left:822.8px;top:122.500px;width:8.400px;height:364px;background:#fff"></div>
<div class="abs" style="left:822.8px;top:486.500px;width:8.400px;height:12px;background:#d4d4d4"></div>
<div class="abs" style="left:822.8px;top:114px;width:8.400px;height:8.500px;background:#fff"></div>
<div class="abs" style="left:822.8px;top:499px;width:8.400px;height:9px;background:#fff"></div>
<svg class="abs" style="left:825.0px;top:116.5px" width="4" height="3" viewBox="0 0 4 3" ><path d="M.3 2.600L2 .5l1.700 2.100z" fill="#666"/></svg>
<svg class="abs" style="left:825.0px;top:502.5px" width="4" height="3" viewBox="0 0 4 3" ><path d="M.3 .4L2 2.500 3.700 .4z" fill="#555"/></svg>
<div class="abs" style="left:279.7px;top:267.5px;width:152.2px;height:85.7px;background:#f0f0f0;border:1px solid #a2a2a2;box-shadow:0 1px 5px rgba(0,0,0,.25)"></div>
<div class="abs" style="left:280.7px;top:268px;width:150.2px;height:15.200px;background:#fff"></div>
<div class="t" style="left:283.6px;top:274px;font-size:6.6px;color:#333;transform:scaleX(0.837);">テーブルとして書式設定</div>
<div class="t" style="left:392.2px;top:273px;font-size:8.2px;color:#555;transform:scaleX(0.701);">?</div>
<svg class="abs" style="left:416.6px;top:273.5px" width="6" height="6" viewBox="0 0 6 6" ><path d="M.5 .5l5 5M5.500 .5l-5 5" stroke="#555" stroke-width=".8" fill="none"/></svg>
<div class="t" style="left:283.6px;top:291px;font-size:6.6px;color:#444;transform:scaleX(0.856);">テーブルに変換するデータ範囲を指定してください(<u>W</u>)</div>
<div class="abs" style="left:298.4px;top:299.200px;width:109.4px;height:12.400px;background:#fff;border:.8px solid #c6c6c6"></div>
<div class="abs" style="left:300.0px;top:301.300px;width:41.6px;height:8.800px;background:#c9c9c9"></div>
<div class="t" style="left:300.6px;top:302px;font-size:7.2px;color:#555;transform:scaleX(1.016);">=$A$1:$E$4</div>
<div class="abs" style="left:341.6px;top:300.800px;width:.8px;height:9.800px;background:#222"></div>
<div class="abs" style="left:408.8px;top:299.200px;width:11px;height:12.400px;background:#fdfdfd;border:.8px solid #c2c2c2"></div>
<svg class="abs" style="left:411.3px;top:301.8px" width="6" height="8" viewBox="0 0 6 8" ><path d="M3 .4L5.400 3.200H3.800V5.600H2.200V3.200H.6z" fill="#222"/><path d="M.8 6.800h4.400" stroke="#222" stroke-width=".9"/></svg>
<div class="abs" style="left:298.4px;top:318px;width:6.600px;height:6.600px;background:#fff;border:.8px solid #555"></div>
<svg class="abs" style="left:299.0px;top:318.6px" width="6" height="6" viewBox="0 0 6 6" ><path d="M1 2.900l1.500 1.600L5 1" stroke="#333" stroke-width=".9" fill="none"/></svg>
<div class="t" style="left:307.8px;top:319px;font-size:6.6px;color:#444;transform:scaleX(0.883);">先頭行をテーブルの見出しとして使用する(<u>M</u>)</div>
<div class="abs" style="left:330.9px;top:334px;width:46.600px;height:15px;background:#e5f1fb;border:1px solid #6fb2e2"></div>
<div class="t" style="left:348.8px;top:339px;font-size:6.8px;color:#333;transform:scaleX(0.916);">OK</div>
<div class="abs" style="left:387.2px;top:334px;width:40.100px;height:15px;background:#e2e2e2;border:.8px solid #b0b0b0"></div>
<div class="t" style="left:392.5px;top:339px;font-size:6.6px;color:#333;transform:scaleX(0.773);">キャンセル</div>
<div class="abs" style="left:324.0px;top:325.800px;width:60.600px;height:29.400px;border:4px solid #fb0006"></div>
<div class="abs" style="left:357.1px;top:331.8px;width:14.600px;height:14.600px;border-radius:50%;background:rgba(248,128,122,.96)"></div>
<svg class="abs" style="left:364.3px;top:339.0px" width="7" height="10" viewBox="0 0 7 10" ><path d="M.6 .6v7.400l1.800-1.600 1.300 2.900 1.200-.5-1.300-2.800h2.400z" fill="#fff" stroke="#444" stroke-width=".5" stroke-linejoin="round"/></svg>
<div class="abs" style="left:0;top:509px;width:833px;height:11.500px;background:#e6e6e6;border-top:.8px solid #c9c9c9"></div>
<div class="abs" style="left:41px;top:509px;width:36px;height:11px;background:#f7f7f7;border-bottom:1.200px solid #2a7a55"></div>
<div class="t" style="left:45.9px;top:511px;font-size:7.6px;color:#2a7350;transform:scaleX(1.042);">Sheet1</div>
<svg class="abs" style="left:10.5px;top:512.5px" width="4" height="5" viewBox="0 0 4 5" ><path d="M3 .5L1 2.500l2 2" fill="none" stroke="#c4c4c4" stroke-width=".8"/></svg>
<svg class="abs" style="left:21.5px;top:512.5px" width="4" height="5" viewBox="0 0 4 5" ><path d="M1 .5l2 2-2 2" fill="none" stroke="#c4c4c4" stroke-width=".8"/></svg>
<svg class="abs" style="left:89.8px;top:511.1px" width="8" height="8" viewBox="0 0 8 8" ><circle cx="4" cy="4" r="3.400" fill="none" stroke="#8a8a8a" stroke-width=".7"/><path d="M4 2.300v3.400M2.300 4h3.400" stroke="#8a8a8a" stroke-width=".7"/></svg>
<div class="abs" style="left:498px;top:512.5px;width:.9px;height:1px;background:#a8a8a8"></div>
<div class="abs" style="left:498px;top:514.6px;width:.9px;height:1px;background:#a8a8a8"></div>
<div class="abs" style="left:498px;top:516.7px;width:.9px;height:1px;background:#a8a8a8"></div>
<div class="abs" style="left:505.5px;top:510.700px;width:7.800px;height:8.600px;background:#fff"></div>
<svg class="abs" style="left:508.0px;top:513.0px" width="3" height="4" viewBox="0 0 3 4" ><path d="M2.600 .3L.5 2l2.100 1.700z" fill="#555"/></svg>
<div class="abs" style="left:514.8px;top:510.700px;width:282.4px;height:8.600px;background:#fff"></div>
<div class="abs" style="left:797.2px;top:510.700px;width:15.300px;height:8.600px;background:#d6d6d6"></div>
<div class="abs" style="left:813.3px;top:510.700px;width:7.800px;height:8.600px;background:#fff"></div>
<svg class="abs" style="left:816.0px;top:513.0px" width="3" height="4" viewBox="0 0 3 4" ><path d="M.4 .3L2.500 2 .4 3.700z" fill="#555"/></svg>
<div class="abs" style="left:0;top:520.500px;width:833px;height:12.500px;background:#f3f3f3;border-top:.8px solid #d2d2d2"></div>
<div class="t" style="left:5.5px;top:524px;font-size:6.4px;color:#555;transform:scaleX(0.962);">参照</div>
<div class="t" style="left:452.0px;top:524px;font-size:6.6px;color:#555;transform:scaleX(1.113);">平均: 81.81818182</div>
<div class="t" style="left:522.0px;top:524px;font-size:6.6px;color:#555;transform:scaleX(0.937);">データの個数: 19</div>
<div class="t" style="left:577.8px;top:524px;font-size:6.6px;color:#555;transform:scaleX(1.084);">合計: 900</div>
<svg class="abs" style="left:617.8px;top:523.0px" width="8" height="8" viewBox="0 0 8 8" ><rect x=".5" y=".8" width="6.500" height="4.400" fill="#555"/><path d="M2 6.600h3.500M3.750 5.200v1.400" stroke="#555" stroke-width=".8"/><circle cx="6.200" cy="5.800" r="1.600" fill="#777" stroke="#f3f3f3" stroke-width=".5"/></svg>
<div class="t" style="left:628.3px;top:524px;font-size:6.6px;color:#555;transform:scaleX(0.974);">表示設定</div>
<svg class="abs" style="left:671.0px;top:523.0px" width="8" height="8" viewBox="0 0 8 8" ><path d="M.5 .5h7v7h-7zM.5 2.800h7M.5 5.100h7M2.800 .5v7M5.100 .5v7" fill="none" stroke="#9a9a9a" stroke-width=".7"/></svg>
<svg class="abs" style="left:692.5px;top:523.0px" width="8" height="8" viewBox="0 0 8 8" ><path d="M.5 .5h7v7h-7z" fill="none" stroke="#8a8a8a" stroke-width=".7"/><path d="M2.200 1.800h3.600v5.700h-3.600z" fill="none" stroke="#8a8a8a" stroke-width=".7"/></svg>
<svg class="abs" style="left:715.0px;top:523.0px" width="8" height="8" viewBox="0 0 8 8" ><path d="M.5 .5h7v7h-7z" fill="none" stroke="#9a9a9a" stroke-width=".7"/><path d="M2.500 .5v3h3v-3" fill="none" stroke="#9a9a9a" stroke-width=".7"/></svg>
<div class="abs" style="left:733.5px;top:526.700px;width:3.600px;height:.8px;background:#bbb"></div>
<div class="abs" style="left:741.5px;top:526.700px;width:54px;height:.8px;background:#c6c6c6"></div>
<div class="abs" style="left:768px;top:524.500px;width:1.200px;height:5px;background:#bbb"></div>
<svg class="abs" style="left:798.3px;top:525.0px" width="4" height="4" viewBox="0 0 4 4" ><path d="M2 .2v3.600M.2 2h3.600" stroke="#bbb" stroke-width=".8"/></svg>
<div class="t" style="left:810.0px;top:524px;font-size:6.6px;color:#c2c2c2;transform:scaleX(1.096);">100%</div>
</div>
<div class="abs" style="left:95px;top:533px;width:833px;height:22px;background:linear-gradient(90deg,#213945 0%,#1f3642 29%,#1c2e3d 71%,#1a2842 96%,#1a2842 100%);overflow:hidden">
<svg class="abs" style="left:9.8px;top:7.5px" width="9" height="9" viewBox="0 0 9 9" ><path d="M.3 1.300l3.500-.5v3.400H.3zM4.300 .7L8.700 0v4.200H4.300zM.3 4.700h3.500v3.400L.3 7.600zM4.300 4.700h4.400V9L4.300 8.300z" fill="#fff"/></svg>
<div class="abs" style="left:27.5px;top:.5px;width:189.8px;height:21.500px;background:#f3f3f3"></div>
<svg class="abs" style="left:34.0px;top:7.0px" width="9" height="9" viewBox="0 0 9 9" ><circle cx="5.400" cy="3.600" r="2.600" fill="none" stroke="#444" stroke-width=".9"/><path d="M3.500 5.500L.8 8.200" stroke="#444" stroke-width="1"/></svg>
<div class="t" style="left:48.8px;top:8px;font-size:7.2px;color:#444;transform:scaleX(0.989);">ここに入力して検索</div>
<svg class="abs" style="left:226.0px;top:6.3px" width="10" height="10" viewBox="0 0 10 10" ><circle cx="4.800" cy="4.800" r="3.400" fill="none" stroke="#fff" stroke-width="1.100"/></svg>
<svg class="abs" style="left:252.5px;top:7.0px" width="10" height="9" viewBox="0 0 10 9" ><rect x="2.200" y="2" width="4.600" height="5" fill="none" stroke="#ddd" stroke-width=".8"/><path d="M.6 1.200v6.600M8.600 1.200v1.600M8.600 4v3.800M2.200 .8h4.600M2.200 8.200h4.600" stroke="#bbb" stroke-width=".8" fill="none"/></svg>
<svg class="abs" style="left:279.3px;top:4.7px" width="13" height="13" viewBox="0 0 13 13" ><rect x=".3" y=".3" width="12.400" height="12.400" rx=".8" fill="#2f7fd8"/><path d="M.3 12.700V8.500l3.700-3.300 3.400 3.200 2-1.600 3.300 2.800v3.100z" fill="#1b3f8f"/><circle cx="9.200" cy="3.400" r="1.200" fill="#fff"/></svg>
<svg class="abs" style="left:307.3px;top:5.3px" width="13" height="12" viewBox="0 0 13 12" ><path d="M.5 1.200h4.300l1 1.300h6.700v8.500H.5z" fill="#f5c64a"/><path d="M.5 4h12v7H.5z" fill="#fbd968"/><path d="M3.300 7h6.400v4H3.300z" fill="#3d8be0"/><path d="M4.600 8.400h3.800v2.600H4.600z" fill="#fbd968"/></svg>
<svg class="abs" style="left:334.8px;top:4.2px" width="13" height="14" viewBox="0 0 13 14" ><path d="M4.200 4V2.600a2.300 2.300 0 0 1 4.600 0V4" fill="none" stroke="#eee" stroke-width=".9"/><rect x=".8" y="4" width="11.400" height="9.300" fill="#f4f4f4"/><rect x="4.200" y="6.300" width="2" height="2" fill="#f25022"/><rect x="6.800" y="6.300" width="2" height="2" fill="#7fba00"/><rect x="4.200" y="8.900" width="2" height="2" fill="#00a4ef"/><rect x="6.800" y="8.900" width="2" height="2" fill="#ffb900"/></svg>
<svg class="abs" style="left:362.0px;top:4.5px" width="14" height="14" viewBox="0 0 14 14" ><circle cx="6.800" cy="6.800" r="6.300" fill="#1b78d0"/><path d="M.8 5.500a6.300 6.300 0 0 1 12.300 1.500c0 1.800-1.500 2.600-2.900 2.600-1.500 0-2-1-1.600-1.600.5-.8.300-2.300-1.800-2.600-2.600-.3-4.800 1-6 3z" fill="#35c1b1" opacity=".9"/><path d="M5.200 7.800c-.3 2.500 1.500 4.600 4.300 4.300a6.300 6.300 0 0 1-7-1.200c-.6-2.200.7-3.400 2.700-3.100z" fill="#0c4a9e"/><circle cx="7.400" cy="7.300" r="1.700" fill="#1e3340"/></svg>
<svg class="abs" style="left:389.5px;top:4.8px" width="13" height="13" viewBox="0 0 13 13" ><path d="M3.600 1.200l8.300.6-1.600 10.500-9.200-1.800z" fill="#8fb6d4"/><path d="M4.400 2.200l6.600.5-1.300 8.600-7.300-1.500z" fill="#dfeaf2"/><path d="M3.600 1.200l8.300.6-.2 1.300-8.500-.6z" fill="#5d86a8"/></svg>
<div class="abs" style="left:417.0px;top:4.7px;width:12.600px;height:12.600px;border-radius:50%;background:#fbf200"></div>
<div class="abs" style="left:413px;top:20.800px;width:20.400px;height:1.200px;background:#9fcdee"></div>
<svg class="abs" style="left:445.5px;top:4.5px" width="12" height="13" viewBox="0 0 12 13" ><path d="M6.300 .6l1.500 4 3.700-.6-2.800 2.900 2 3.600-3.600-1.400-2 3.300-.4-3.900-4-.9 3.600-1.700L2.800 1.800l3 2.300z" fill="#b9d5f0"/><path d="M5 4l4.800 4.400-2 .1 1 2.300-1 .5-1.100-2.300L5.300 10.400z" fill="#fff" stroke="#456" stroke-width=".3"/></svg>
<svg class="abs" style="left:472.3px;top:5.2px" width="14" height="12" viewBox="0 0 14 12" ><path d="M.5 4.200L7 .5l6.500 3.700V11H.5z" fill="#1b86e0"/><path d="M.5 4.400L7 8.200l6.500-3.800V11H.5z" fill="#3aa0f0"/><path d="M.5 11L5.600 7.400M13.500 11L8.400 7.400" stroke="#1b74c8" stroke-width=".5"/></svg>
<div class="abs" style="left:500.20000000000005px;top:4.5px;width:13.500px;height:13.500px;background:#2b3b47"></div>
<svg class="abs" style="left:502.2px;top:6.2px" width="10" height="10" viewBox="0 0 10 10" ><path d="M3.500 .8l3.400 3.400-3.400 3.400-1.600-1.600 1.800-1.800-1.800-1.800z" fill="#2fd0b4"/><path d="M5.500 6.500l1.600 1.600-1.400 1.400-1.600-1.600z" fill="#1a9c88"/></svg>
<div class="abs" style="left:496px;top:20.800px;width:22px;height:1.200px;background:#9fcdee"></div>
<div class="abs" style="left:522px;top:0;width:25.800px;height:22px;background:#465764"></div>
<div class="abs" style="left:522px;top:20.800px;width:25.800px;height:1.200px;background:#a8d3f0"></div>
<svg class="abs" style="left:528.3px;top:5.0px" width="14" height="12" viewBox="0 0 14 12" ><rect x="3.800" y=".6" width="9.600" height="10.800" rx=".8" fill="#21a366"/><rect x="8.600" y=".6" width="4.800" height="5.400" fill="#33c481"/><rect x="8.600" y="6" width="4.800" height="5.400" fill="#107c41"/><rect x="3.800" y="6" width="4.800" height="5.400" fill="#185c37"/><rect x=".4" y="2.800" width="6.800" height="6.400" rx=".6" fill="#107c41"/><path d="M2.400 4.300l2.800 3.400M5.200 4.300L2.400 7.700" stroke="#fff" stroke-width=".9"/></svg>
<svg class="abs" style="left:555.0px;top:4.5px" width="15" height="14" viewBox="0 0 15 14" ><rect x=".8" y="1.200" width="9.600" height="7.800" rx="1.200" fill="#2aa7e0"/><path d="M10.400 4l3.600-2.200v6.600L10.400 6.200z" fill="#2aa7e0"/><circle cx="5.600" cy="5.100" r="2.500" fill="#e8413a" stroke="#f4f4f4" stroke-width=".8"/><path d="M5.600 9v2.400M3 11.600h5.200" stroke="#7cc8ee" stroke-width=".9"/></svg>
<div class="abs" style="left:551px;top:20.800px;width:22.600px;height:1.200px;background:#9fcdee"></div>
<svg class="abs" style="left:606.3px;top:8.8px" width="7" height="5" viewBox="0 0 7 5" ><path d="M.6 3.800L3.400 1l2.800 2.800" fill="none" stroke="#ddd" stroke-width=".8"/></svg>
<svg class="abs" style="left:622.5px;top:7.5px" width="9" height="8" viewBox="0 0 9 8" ><path d="M.5 2.600h1.600L4.200 .8v6L2.100 5H.5z" fill="none" stroke="#ccc" stroke-width=".7"/><path d="M5.400 2.400c.7.800.7 2 0 2.800M6.600 1.400c1.200 1.400 1.200 3.400 0 4.800" fill="none" stroke="#aaa" stroke-width=".6"/></svg>
<div class="abs" style="left:680px;top:11.5px;width:4.500px;height:4.500px;border-radius:50%;background:#d9443c"></div>
<div class="abs" style="left:692px;top:7px;width:6px;height:5px;background:#8a97a6;opacity:.7"></div>
<div class="t" style="left:639.2px;top:4px;font-size:15.5px;color:rgba(240,240,240,.93);transform:scaleX(1.008);text-shadow:0 0 1.500px rgba(0,0,0,.6);-webkit-text-stroke:.35px rgba(240,240,240,.9);">© 2021 sayma</div>
<div class="abs" style="left:737px;top:0;width:10px;height:22px;background:#1b2a40"></div>
<div class="abs" style="left:734.5px;top:7px;width:1.200px;height:9px;background:#cfd4da"></div>
<svg class="abs" style="left:746.5px;top:6.5px" width="9" height="9" viewBox="0 0 9 9" ><circle cx="4" cy="4" r="3.600" fill="#1f7ae0"/><circle cx="6.300" cy="6.400" r="1.500" fill="#e8473c"/><circle cx="7" cy="6.900" r=".8" fill="#f3c02b"/></svg>
<div class="t" style="left:774.5px;top:4px;font-size:6.4px;color:#fff;transform:scaleX(0.994);">15:47</div>
<div class="t" style="left:765.3px;top:14px;font-size:6.4px;color:#fff;transform:scaleX(1.059);">2021/05/08</div>
<svg class="abs" style="left:809.8px;top:6.5px" width="10" height="10" viewBox="0 0 10 10" ><path d="M.8 .8h8.200v6h-2.500v1.800l-1.800-1.800H.8z" fill="#fff"/><path d="M2.300 2.600h5.200M2.300 4.300h5.200" stroke="#345" stroke-width=".6"/><circle cx="7.700" cy="7.400" r="1.400" fill="#445" stroke="#ccc" stroke-width=".4"/></svg>
<div class="abs" style="left:829.6px;top:0;width:.8px;height:22px;background:#5a6a7e"></div>
</div>
<svg class="abs" style="left:950px;top:0" width="74" height="19" viewBox="950 0 74 19" fill="none" stroke="#e8e8e8" stroke-width=".9"><path d="M959.600 9h5.400"/><rect x="984.300" y="7.300" width="4.400" height="4.400"/><path d="M985.600 7.300v-1.300h4.400v4.400h-1.300"/><path d="M1009.200 6.300l5 5M1014.200 6.300l-5 5"/></svg>
</body></html>
